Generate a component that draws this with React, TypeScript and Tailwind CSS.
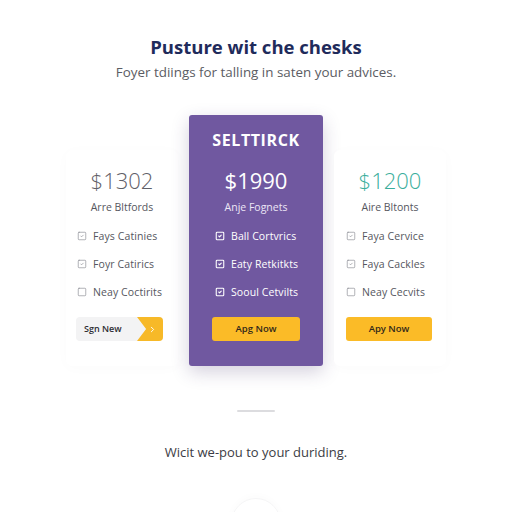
import { Square, SquareCheck, ChevronRight } from "lucide-react"

interface Feature {
  label: string
  checked: boolean
}

const leftFeatures: Feature[] = [
  { label: "Fays Catinies", checked: true },
  { label: "Foyr Catirics", checked: true },
  { label: "Neay Coctirits", checked: false },
]

const midFeatures: Feature[] = [
  { label: "Ball Cortvrics", checked: true },
  { label: "Eaty Retkitkts", checked: true },
  { label: "Sooul Cetvilts", checked: true },
]

const rightFeatures: Feature[] = [
  { label: "Faya Cervice", checked: true },
  { label: "Faya Cackles", checked: true },
  { label: "Neay Cecvits", checked: false },
]

function FeatureList({ items, light }: { items: Feature[]; light?: boolean }) {
  return (
    <ul className="mt-[13px] flex flex-col gap-[12px]">
      {items.map((f) => (
        <li
          key={f.label}
          className={`flex items-center gap-[6px] whitespace-nowrap text-[10.5px] leading-[16px] tracking-[0.1px] ${
            light ? "text-white" : "text-[#55565e]"
          }`}
        >
          {f.checked ? (
            <SquareCheck size={10} strokeWidth={light ? 2.6 : 1.6} className={light ? "text-white" : "text-[#8a8b92]"} />
          ) : (
            <Square size={10} strokeWidth={1.6} className="text-[#8a8b92]" />
          )}
          <span>{f.label}</span>
        </li>
      ))}
    </ul>
  )
}

export default function App() {
  return (
    <div className="relative h-[512px] w-[512px] overflow-hidden bg-white font-['Open_Sans','Liberation_Sans',sans-serif]">
      <div className="flex flex-col items-center pt-[33px]">
        <h1 className="text-[18.5px] font-bold leading-[28px] text-[#1f2b5b]">Pusture wit che chesks</h1>
        <p className="mt-[1px] text-[13.4px] leading-[20px] text-[#5b5c63]">
          Foyer tdiings for talling in saten your advices.
        </p>

        <div className="mt-[33px] flex items-start gap-[11px]">
          {/* Left plan */}
          <div className="mt-[35px] flex w-[112px] flex-col items-center rounded-md bg-white px-[10px] pb-[25px] pt-[14px] shadow-[0_2px_14px_rgba(0,0,0,0.02)]">
            <div className="text-[22px] font-light leading-[32px] text-[#5f6068]">$1302</div>
            <div className="mt-[3px] text-[10.5px] leading-[16px] text-[#55565e]">Arre Bltfords</div>
            <div className="self-start pl-[1px]">
              <FeatureList items={leftFeatures} />
            </div>
            <div className="mt-[17px] flex h-[24px] w-[87px] items-stretch self-start overflow-hidden rounded-[4px] bg-[#f3f3f4]">
              <span className="flex flex-1 items-center pl-[8px] text-[9px] font-semibold text-[#2d2d33]">Sgn New</span>
              <span className="flex w-[26px] items-center justify-center bg-[#f7b928] pl-[4px] text-white [clip-path:polygon(0_0,100%_0,100%_100%,0_100%,35%_50%)]">
                <ChevronRight size={9} strokeWidth={2.5} />
              </span>
            </div>
          </div>

          {/* Featured plan */}
          <div className="flex w-[134px] flex-col items-center rounded-[3px] bg-[#7058a0] px-[20px] pb-[25px] pt-[13px] shadow-[0_6px_18px_rgba(60,40,100,0.22)]">
            <div className="text-[16px] font-bold leading-[24px] tracking-[0.6px] text-white">SELTTIRCK</div>
            <div className="mt-[12px] text-[22px] leading-[32px] text-white">$1990</div>
            <div className="mt-[3px] text-[10.5px] leading-[16px] text-[#ece6f6]">Anje Fognets</div>
            <div className="self-start pl-[6px]">
              <FeatureList items={midFeatures} light />
            </div>
            <button className="mt-[17px] flex h-[24px] w-[88px] items-center justify-center rounded-[3px] bg-[#fbbb27] text-[9.5px] font-semibold text-[#33291a]">
              Apg Now
            </button>
          </div>

          {/* Right plan */}
          <div className="mt-[35px] flex w-[112px] flex-col items-center rounded-md bg-white px-[12px] pb-[25px] pt-[14px] shadow-[0_2px_14px_rgba(0,0,0,0.02)]">
            <div className="text-[22px] font-light leading-[32px] text-[#3aae9c]">$1200</div>
            <div className="mt-[3px] text-[10.5px] leading-[16px] text-[#55565e]">Aire Bltonts</div>
            <div className="self-start">
              <FeatureList items={rightFeatures} />
            </div>
            <button className="mt-[17px] flex h-[24px] w-[86px] items-center justify-center self-start rounded-[3px] bg-[#fbbb27] text-[9.5px] font-semibold text-[#33291a]">
              Apy Now
            </button>
          </div>
        </div>

        <div className="mt-[44px] h-[2px] w-[38px] rounded bg-[#dcdcdf]" />
        <p className="mt-[31px] text-[13px] leading-[18px] text-[#3b3c44]">Wicit we-pou to your duriding.</p>
        <div className="mt-[37px] h-[50px] w-[50px] rounded-full border border-[#f5f5f6] shadow-[0_-2px_8px_rgba(0,0,0,0.02)]" />
      </div>
    </div>
  )
}
